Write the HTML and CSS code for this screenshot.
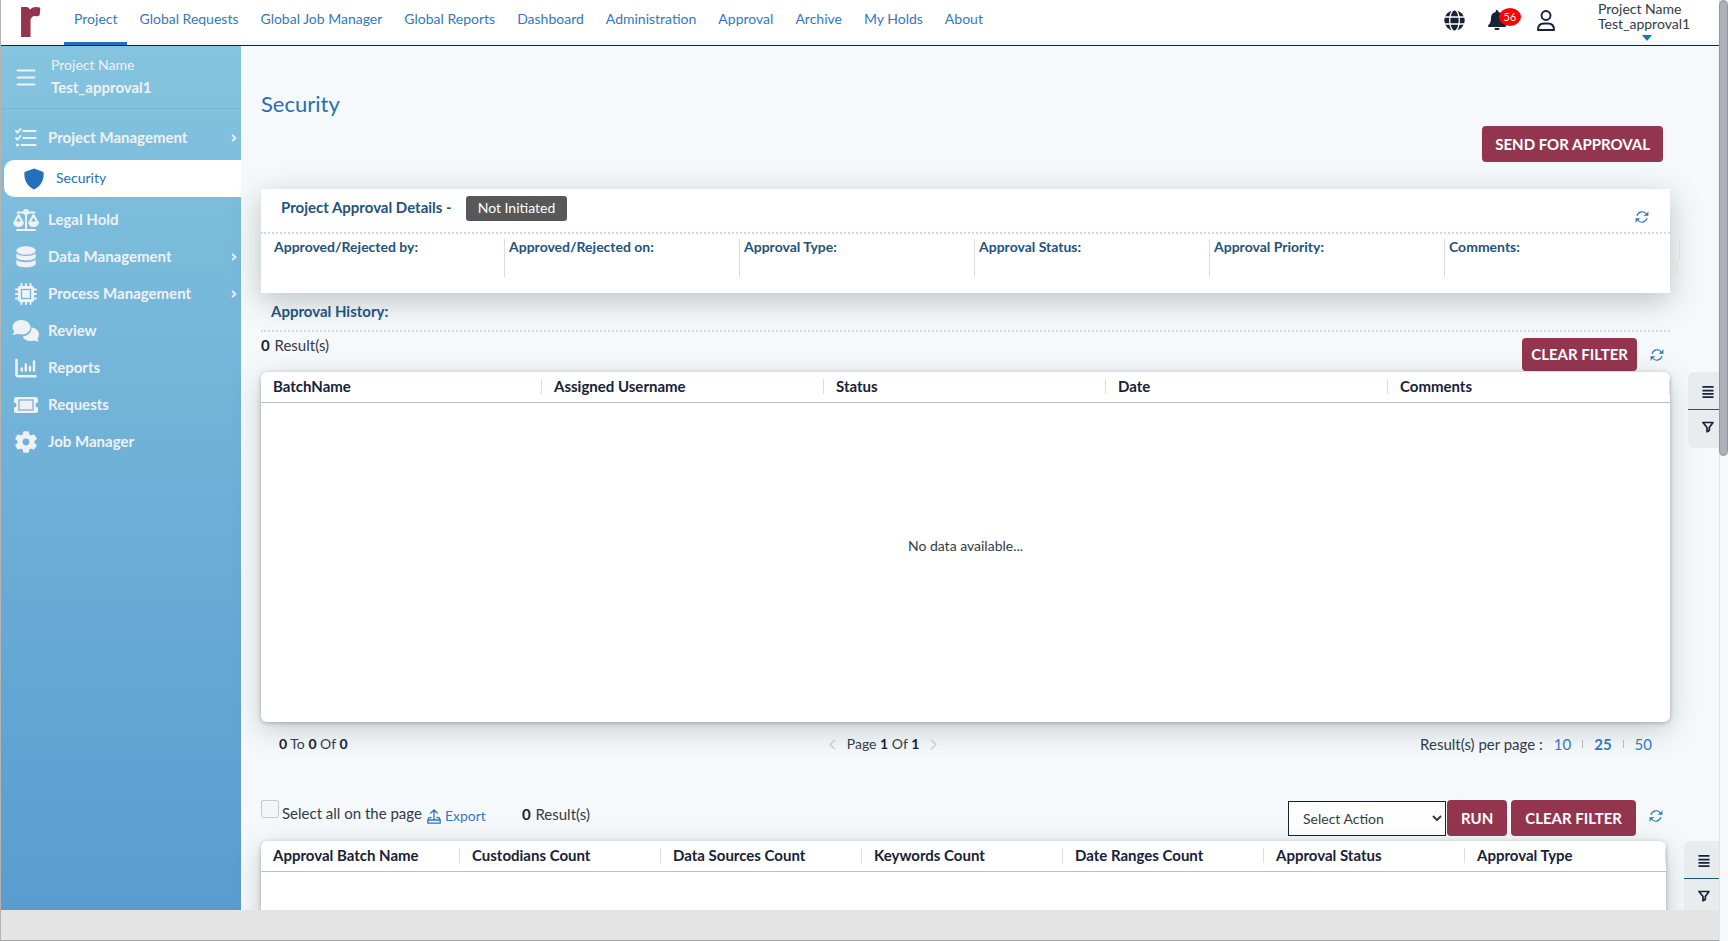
FILE: index.html
```html
<!DOCTYPE html>
<html lang="en">
<head>
<meta charset="utf-8">
<title>Security</title>
<link rel="stylesheet" href="styles.css">
</head>
<body>
<svg class="defs" aria-hidden="true">
  <symbol id="refresh" viewBox="0 0 16 16"><g fill="none" stroke="currentColor" stroke-width="1.3"><path d="M2.3 6.6A6 6 0 0 1 13 4.6M13.7 9.4A6 6 0 0 1 3 11.400"/></g><path fill="currentColor" d="M15.300 1v5.600H9.700l2-1.500 2-1.500zM.7 15V9.400h5.600l-2 1.500-2 1.500z"/></symbol>
  <symbol id="lines" viewBox="0 0 12 13"><path stroke="currentColor" stroke-width="2" d="M0 1h12M0 5h12M0 8.500h12M0 12h12"/></symbol>
  <symbol id="funnel" viewBox="0 0 12 12"><path fill="none" stroke="currentColor" stroke-width="1.700" stroke-linejoin="round" d="M1 1.500h10L7.300 6.500v3L5 10.800V6.500z"/></symbol>
  <symbol id="chev" viewBox="0 0 6 8"><path fill="none" stroke="currentColor" stroke-width="1.800" d="M1 .8 4.500 4 1 7.200"/></symbol>
</svg>
<div class="window">
  <header class="top">
    <a class="logo" href="#">r</a>
    <nav class="tabs">
      <a class="current" href="#">Project</a><a href="#">Global Requests</a><a href="#">Global Job Manager</a><a href="#">Global Reports</a><a href="#">Dashboard</a><a href="#">Administration</a><a href="#">Approval</a><a href="#">Archive</a><a href="#">My Holds</a><a href="#">About</a>
    </nav>
    <div class="tools">
      <button class="tool" aria-label="Language"><svg width="21" height="21" viewBox="0 0 21 21"><circle cx="10.500" cy="10.500" r="10.200" fill="#172238"/><g fill="none" stroke="#fff" stroke-width="1.300"><ellipse cx="10.500" cy="10.500" rx="4.800" ry="10.800"/><path d="M0 7h21M0 14h21"/></g></svg></button>
      <button class="tool bell" aria-label="Notifications"><svg width="18" height="20" viewBox="0 0 18 20"><path fill="#172238" d="M9 0c.8 0 1.300.6 1.300 1.300v.6A6 6 0 0 1 15 7.800c0 4 .8 5.500 2.600 7.200.8.900.3 1.900-.7 1.900H1.100c-1 0-1.500-1-.7-1.900C2.200 13.300 3 11.800 3 7.800a6 6 0 0 1 4.700-5.900v-.6C7.700.6 8.200 0 9 0zM6.500 18h5a2.500 2.500 0 0 1-5 0z"/></svg><span class="count">56</span></button>
      <button class="tool" aria-label="Account"><svg width="18" height="21" viewBox="0 0 18 21"><g fill="none" stroke="#172238" stroke-width="1.900"><circle cx="9" cy="5.500" r="4.500"/><path stroke-linejoin="round" d="M1 20c0-4.500 2.500-6.500 6-6.500h4c3.500 0 6 2 6 6.500z"/></g></svg></button>
      <button class="project"><span>Project Name</span><span>Test_approval1</span><i class="caret"></i></button>
    </div>
  </header>
  <div class="middle">
    <aside class="side">
      <div class="side-head">
        <button class="burger" aria-label="Menu"><svg width="20" height="17" viewBox="0 0 20 17"><path stroke="currentColor" stroke-width="2" stroke-linecap="round" d="M1.500 1.500h17M1.500 8.500h17M1.500 15.500h17"/></svg></button>
        <div class="side-name"><span>Project Name</span><strong>Test_approval1</strong></div>
      </div>
      <nav class="menu">
        <a class="item" href="#"><svg width="28" height="22" viewBox="0 0 28 22"><g fill="none" stroke="currentColor" stroke-width="2.200" stroke-linecap="round"><path d="M11.500 4H23.500M11.500 11H23.500M9.500 18H23.500"/><path stroke-width="1.900" d="M4 4l1.500 1.500L8.500 2M4 11l1.500 1.500L8.500 9"/></g><circle cx="5.500" cy="18" r="1.600" fill="currentColor"/></svg><span>Project Management</span><svg class="chev"><use href="#chev"/></svg></a>
        <a class="item active" href="#"><svg width="22" height="22" viewBox="0 0 22 22"><path fill="currentColor" d="M11 .5 20.500 4c.8 7-2 14-9.500 17.500C3.500 18 .7 11 1.500 4z"/></svg><span>Security</span></a>
        <a class="item" href="#"><svg width="28" height="22" viewBox="0 0 28 22"><g fill="none" stroke="currentColor" stroke-width="2"><path stroke-linecap="round" d="M5.500 3.500H22.500M5 21H23M14 4v17"/><circle cx="14" cy="3" r="2"/><path stroke-linejoin="round" d="M6.500 6 2.500 13.500H10.500zM21.500 6 17.500 13.500H25.500z"/></g><path fill="currentColor" d="M1 13h11c-.3 3-2.500 5-5.500 5S1.300 16 1 13zM16 13h11c-.3 3-2.500 5-5.500 5s-5.200-2-5.500-5z"/></svg><span>Legal Hold</span></a>
        <a class="item" href="#"><svg width="28" height="22" viewBox="0 0 28 22"><g fill="currentColor"><ellipse cx="14" cy="4.500" rx="9.700" ry="4.300"/><path d="M4.300 7.500c3 3.300 16.400 3.300 19.400 0v3.600c0 4.500-19.400 4.500-19.400 0z"/><path d="M4.300 13.800c3 3.300 16.400 3.300 19.400 0v3.800c0 5.200-19.400 5.200-19.400 0z"/></g></svg><span>Data Management</span><svg class="chev"><use href="#chev"/></svg></a>
        <a class="item" href="#"><svg width="28" height="22" viewBox="0 0 28 22"><rect x="6" y="3" width="16" height="16" rx="2" fill="currentColor"/><path stroke="currentColor" stroke-width="2" stroke-linecap="round" d="M9.500 1v20M14 1v20M18.500 1v20M4 6.500h20M4 11h20M4 15.500h20"/><rect x="9.500" y="6.500" width="9" height="9" fill="currentColor" stroke="#73b5d9" stroke-width="1.200"/></svg><span>Process Management</span><svg class="chev"><use href="#chev"/></svg></a>
        <a class="item" href="#"><svg width="28" height="22" viewBox="0 0 28 22"><g fill="currentColor"><path d="M19.500 7.500c4.300.2 7.500 3.200 7.500 7 0 1.800-.7 3.200-1.600 4.400.3 1 1 1.700 1.800 2.300-2 .5-3.700-.2-5-.8-4.700 1.600-10 0-11.400-4 5.500-.7 9-4 8.700-8.900z"/><path d="M9.500 0C14.500 0 18.500 3.200 18.500 7.300s-4 7.300-9 7.300c-1.500 0-3-.3-4.200-.8-1.300.7-3 1.300-5 1 .8-.7 1.700-1.800 2-3.200A6.400 6.400 0 0 1 .5 7.300C.5 3.200 4.500 0 9.500 0z"/></g></svg><span>Review</span></a>
        <a class="item" href="#"><svg width="28" height="22" viewBox="0 0 28 22"><g fill="none" stroke="currentColor" stroke-linecap="round"><path stroke-width="2.600" stroke-linejoin="round" d="M4.500 3v14.500a1.800 1.800 0 0 0 1.800 1.800H23.500"/><path stroke-width="2.400" d="M9.800 11.500V13.500M13.800 7.500V13.500M18 10V13.500M22 4.500V13.500"/></g></svg><span>Reports</span></a>
        <a class="item" href="#"><svg width="28" height="22" viewBox="0 0 28 22"><path fill="currentColor" d="M4.500 3h19C25.200 3 26 4 26 5.300V8.500a2.500 2.500 0 0 0 0 5v3.200c0 1.300-.8 2.300-2.500 2.300h-19C2.800 19 2 18 2 16.700V13.500a2.500 2.500 0 0 0 0-5V5.300C2 4 2.800 3 4.500 3z"/><rect x="7" y="6" width="14" height="10" fill="currentColor" stroke="#6bafd7" stroke-width="1.200"/></svg><span>Requests</span></a>
        <a class="item" href="#"><svg width="28" height="22" viewBox="0 0 28 22"><path fill="currentColor" fill-rule="evenodd" stroke="currentColor" stroke-linejoin="round" stroke-width="1.500" d="M12 1h4l.7 3 2.300 1.300 3-1 2 3.400L21.700 9.800v2.400l2.300 2.100-2 3.400-3-1L16.700 18l-.7 3h-4l-.7-3L9 16.700l-3 1-2-3.400 2.300-2.100V9.800L4 7.700l2-3.400 3 1L11.300 4zM14 6.800a4.200 4.200 0 1 0 0 8.400 4.200 4.200 0 0 0 0-8.400z"/></svg><span>Job Manager</span></a>
      </nav>
    </aside>
    <main class="page">
      <h1>Security</h1>
      <div class="send"><button class="btn">SEND FOR APPROVAL</button></div>
      <section class="card">
        <div class="card-head">
          <h2>Project Approval Details -</h2><span class="badge">Not Initiated</span>
          <button class="refresh" aria-label="Refresh details"><svg><use href="#refresh"/></svg></button>
        </div>
        <div class="facts">
          <div>Approved/Rejected by:</div><div>Approved/Rejected on:</div><div>Approval Type:</div><div>Approval Status:</div><div>Approval Priority:</div><div>Comments:</div>
        </div>
      </section>
      <h2 class="history">Approval History:</h2>
      <div class="bar">
        <p class="results"><b>0</b> Result(s)</p>
        <button class="btn small">CLEAR FILTER</button>
        <button class="refresh" aria-label="Refresh history"><svg><use href="#refresh"/></svg></button>
      </div>
      <div class="grid-row">
        <div class="grid tall">
          <table class="five">
            <thead><tr><th><span>BatchName</span></th><th><span>Assigned Username</span></th><th><span>Status</span></th><th><span>Date</span></th><th><span>Comments</span></th></tr></thead>
            <tbody><tr><td colspan="5">No data available...</td></tr></tbody>
          </table>
        </div>
        <div class="rail"><button aria-label="Columns"><svg><use href="#lines"/></svg></button><button aria-label="Filter"><svg><use href="#funnel"/></svg></button></div>
      </div>
      <div class="pager">
        <p><b>0</b> To <b>0</b> Of <b>0</b></p>
        <p class="pages"><button aria-label="Previous page"><svg width="7" height="11" viewBox="0 0 7 11"><path fill="none" stroke="#ccc" stroke-width="1.500" d="M6 .7 1.200 5.500 6 10.300"/></svg></button><span>Page <b>1</b> Of <b>1</b></span><button aria-label="Next page"><svg width="7" height="11" viewBox="0 0 7 11"><path fill="none" stroke="#ccc" stroke-width="1.500" d="M1 .7 5.800 5.500 1 10.300"/></svg></button></p>
        <p class="sizes"><span>Result(s) per page :</span><a href="#">10</a><i></i><a class="chosen" href="#">25</a><i></i><a href="#">50</a></p>
      </div>
      <div class="actions">
        <input type="checkbox" id="all"><label for="all">Select all on the page</label>
        <a class="export" href="#"><svg width="14" height="15" viewBox="0 0 14 15"><g fill="none" stroke="currentColor" stroke-width="1.300"><path d="M7 10.500V1.300M3.300 4.500 7 1l3.700 3.500M4.500 8.500 2 8.700 .8 11v3.200h12.400V11L12 8.700 9.500 8.500M1 11h12"/></g></svg>Export</a>
        <p class="results"><b>0</b> Result(s)</p>
        <div class="run">
          <select aria-label="Select Action"><option>Select Action</option></select>
          <button class="btn">RUN</button>
          <button class="btn">CLEAR FILTER</button>
          <button class="refresh" aria-label="Refresh batches"><svg><use href="#refresh"/></svg></button>
        </div>
      </div>
      <div class="grid-row second">
        <div class="grid">
          <table class="seven">
            <thead><tr><th><span>Approval Batch Name</span></th><th><span>Custodians Count</span></th><th><span>Data Sources Count</span></th><th><span>Keywords Count</span></th><th><span>Date Ranges Count</span></th><th><span>Approval Status</span></th><th><span>Approval Type</span></th></tr></thead>
            <tbody><tr><td colspan="7"></td></tr></tbody>
          </table>
        </div>
        <div class="rail"><button aria-label="Columns"><svg><use href="#lines"/></svg></button><button aria-label="Filter"><svg><use href="#funnel"/></svg></button></div>
      </div>
    </main>
  </div>
  <footer class="status"></footer>
</div>
<div class="scroll"><div class="thumb"></div></div>
</body>
</html>
```

FILE: styles.css
```css
* { box-sizing: border-box; }
body { margin: 0; height: 100vh; display: flex; overflow: hidden; font: 14px/20px Lato, sans-serif; color: #343a48; background: #f5f9fc; }
p, h1, h2 { margin: 0; }
a { color: #3378c0; text-decoration: none; }
button { font: inherit; color: inherit; border: 0; padding: 0; background: none; cursor: pointer; }
b { color: #172238; }
svg { display: block; flex: none; }
.defs { position: absolute; width: 0; height: 0; }

.window { flex: 1; min-width: 0; display: flex; flex-direction: column; border-left: 1px solid #b4b4b4; }
.scroll { width: 9px; border-left: 1px solid #dfe3e7; background: #f5f9fc; }
.thumb { height: 456px; margin-left: -1px; border-radius: 5px; background: #aeb0b9; border: 1px solid #94969e; }

.top { flex: none; height: 46px; display: flex; background: linear-gradient(#fff 41px, #f5f9fc 41px); border-bottom: 1px solid #172238; }
.logo { width: 63px; padding-left: 18px; font: 900 54px/32px Lato, sans-serif; color: #94354f; -webkit-text-stroke: 2px #94354f; }
.tabs { display: flex; gap: 2px; }
.tabs a { padding: 9px 10px 0; height: 45px; white-space: nowrap; }
.tabs .current { border-bottom: 3px solid #2470bd; }
.tools { margin-left: auto; display: flex; align-items: flex-start; padding-right: 24px; }
.tool { margin: 10px 0 0 23px; }
.bell { position: relative; }
.tool:nth-child(3) { margin-left: 31px; }
.count { position: absolute; left: 11px; top: -2px; width: 22px; height: 18px; border-radius: 50%; background: #f00; color: #fff; font-size: 11px; line-height: 18px; }
.project { margin: 1px 0 0 43px; width: 97px; display: flex; flex-direction: column; line-height: 15px; text-align: left; }
.caret { align-self: center; margin-top: 4px; border: 5px solid transparent; border-top: 6px solid #0a7cc4; border-bottom: 0; }

.middle { flex: 1; min-height: 0; display: flex; overflow: hidden; }
.side { width: 240px; flex: none; background: linear-gradient(#84c4df, #599ccf); color: #f0f1f5; }
.side-head { display: flex; align-items: center; height: 63px; padding: 0 0 3px 15px; border-bottom: 1px solid #83b3c9; }
.burger { margin-top: 3px; }
.side-name { display: flex; flex-direction: column; margin-left: 15px; line-height: 23px; }
.side-name strong { font-size: 15px; }
.menu { padding-top: 10px; }
.item { display: flex; align-items: center; height: 37px; padding: 0 4px 0 11px; color: #f0f1f5; font-size: 15px; font-weight: 700; }
.item span { margin-left: 8px; padding-bottom: 2px; }
.chev { width: 6px; height: 8px; margin-left: auto; }
.item.active { margin: 4px 0 4px 3px; padding-left: 19px; border-radius: 10px 0 0 10px; background: #fff; color: #2470bd; font-size: 14px; font-weight: 400; }
.item.active span { margin-left: 11px; }

.page { flex: 1; min-width: 0; padding: 43px 0 0 20px; }
h1 { font-weight: 400; font-size: 22px; line-height: 30px; color: #2a6db6; }
.btn { height: 36px; padding: 0 13px 1px; border-radius: 4px; background: #94354f; color: #fff; font-size: 15px; font-weight: 700; white-space: nowrap; }
.btn.small { height: 33px; padding: 0 9px 2px; }
.send { display: flex; justify-content: flex-end; margin: 7px 56px 27px 0; }
h2 { font-size: 15px; line-height: 20px; color: #24527c; }
.refresh { color: #2a74c0; }
.refresh svg { width: 14px; height: 14px; }

.card { margin-right: 49px; height: 104px; background: #fff; box-shadow: 0 8px 28px rgba(60, 70, 70, .3); }
.card-head { display: flex; align-items: flex-start; height: 45px; padding: 7px 21px 0 20px; border-bottom: 2px dotted #cfdbe2; }
.card-head h2 { padding-top: 1px; }
.card-head .refresh { margin: 14px 0 0 auto; }
.badge { margin-left: 14px; padding: 0 12px; height: 25px; line-height: 23px; border-radius: 3px; background: #585858; color: #fff; }
.facts { display: grid; grid-template-columns: repeat(6, 1fr); margin: 5px -10px 0 9px; }
.facts div { height: 38px; padding: 0 0 0 4px; border-right: 1px solid #dcdcd8; color: #24527c; font-weight: 700; line-height: 16px; white-space: nowrap; }
.facts div:last-child { position: relative; height: 20px; }
.facts div:last-child::after { content: ""; position: absolute; right: 2px; top: 23px; height: 12px; border-right: 1px solid #dcdcd8; }
.history { margin-right: 49px; padding: 8px 10px 9px; border-bottom: 2px dotted #cfdbe2; }

.bar { display: flex; align-items: flex-start; margin-right: 55px; padding: 6px 0 1px; }
.results { font-size: 15px; }
.results b { margin-right: 1px; }
.bar .results { margin-right: auto; line-height: 15px; }
.bar .refresh { margin: 10px 0 0 13px; }

.grid-row { display: flex; justify-content: space-between; align-items: flex-start; gap: 18px; }
.grid { flex: 1; min-width: 0; border-radius: 6px; background: #fff; box-shadow: 0 1px 4px rgba(0, 0, 0, .25), 0 8px 28px rgba(60, 70, 70, .25); }
table { width: 100%; table-layout: fixed; border-collapse: collapse; }
th { height: 30px; padding: 0 0 1px; border-bottom: 1px solid #b9bec4; text-align: left; font-size: 15px; font-weight: 700; color: #172238; }
th span { display: block; padding-left: 12px; border-right: 1px solid #dcdde0; height: 15px; line-height: 14px; white-space: nowrap; }
.five th:first-child { width: 281px; }
.seven th:first-child { width: 199px; }
td { height: 69px; text-align: center; }
.tall td { height: 320px; padding-bottom: 34px; }
.rail { width: 31px; border-radius: 6px 0 0 6px; background: #e9ecef; color: #172238; }
.rail button { display: flex; align-items: center; width: 100%; height: 38px; padding: 2px 0 0 14px; }
.rail button:first-child { border-bottom: 1px solid #1d5586; }
.rail button:last-child { padding: 0 0 4px 14px; }
.rail svg { width: 12px; height: 12px; }
.second .rail { width: 35px; }

.pager { display: grid; grid-template-columns: 10fr auto 13fr; align-items: center; margin-right: 49px; padding: 12px 18px 0; }
.pages { display: flex; align-items: center; gap: 11px; }
.sizes { display: flex; align-items: center; justify-content: flex-end; gap: 11px; font-size: 15px; }
.sizes i { width: 1px; height: 8px; background: #b9b9b0; }
.chosen { font-weight: 700; }

.actions { display: flex; align-items: flex-start; margin: 46px 56px 5px 0; height: 36px; }
.actions input { appearance: none; margin: 0 3px 0 0; width: 18px; height: 18px; border: 1px solid #c8cacd; border-radius: 2px; background: #f3f5f8; }
.actions label { padding-top: 3px; font-size: 15px; }
.export { display: flex; align-items: center; gap: 4px; margin: 6px 36px 0 5px; }
.actions .results { padding-top: 4px; }
.run { display: flex; align-items: center; gap: 4px; margin-left: auto; }
.run select { width: 158px; height: 35px; margin: 1px -3px 0 0; padding: 0 0 0 10px; border: 1px solid #172238; border-radius: 0; background: #fff; font: inherit; color: inherit; }
.run .btn { padding: 0 14px 1px; }
.run .refresh { margin: 0 0 4px 9px; }

.status { flex: none; height: 31px; background: #e4e4e4; border-bottom: 1px solid #a5a5a5; }
```
